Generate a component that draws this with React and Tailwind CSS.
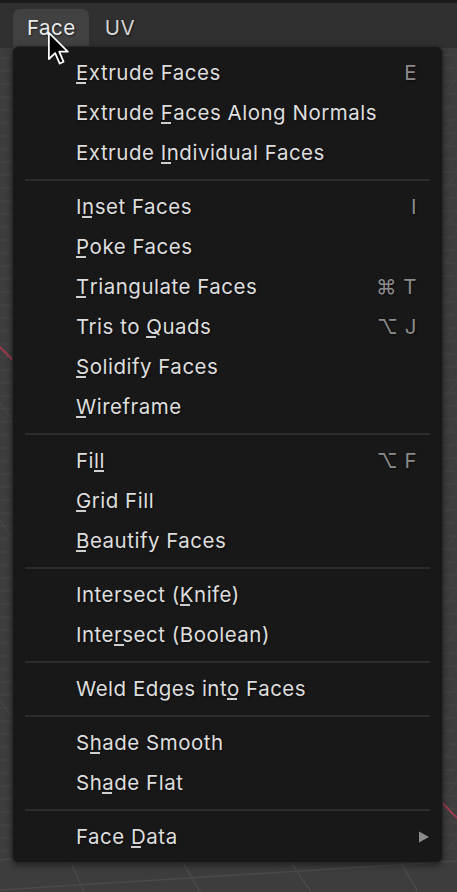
import React from "react";

const groups = [
  [
    { label: "Extrude Faces", u: 0, sc: "E" },
    { label: "Extrude Faces Along Normals", u: 8 },
    { label: "Extrude Individual Faces", u: 8 },
  ],
  [
    { label: "Inset Faces", u: 1, sc: "I" },
    { label: "Poke Faces", u: 0 },
    { label: "Triangulate Faces", u: 0, sc: "⌘ T" },
    { label: "Tris to Quads", u: 8, sc: "⌥ J" },
    { label: "Solidify Faces", u: 0 },
    { label: "Wireframe", u: 0 },
  ],
  [
    { label: "Fill", u: 2, sc: "⌥ F" },
    { label: "Grid Fill", u: 0 },
    { label: "Beautify Faces", u: 0 },
  ],
  [
    { label: "Intersect (Knife)", u: 11 },
    { label: "Intersect (Boolean)", u: 4 },
  ],
  [{ label: "Weld Edges into Faces", u: 14 }],
  [
    { label: "Shade Smooth", u: 1 },
    { label: "Shade Flat", u: 2 },
  ],
  [{ label: "Face Data", u: 5, arrow: true }],
];

function Label({ text, u }) {
  return (
    <span className="whitespace-pre">
      {text.slice(0, u)}
      <span className="relative">
        {text[u]}
        <span className="absolute left-0 bottom-[1px] w-[10px] h-[2px] bg-[#cfcfcf]" />
      </span>
      {text.slice(u + 1)}
    </span>
  );
}

function Item({ it }) {
  return (
    <div className="h-[40px] flex items-center pl-[63px] pr-[25px] text-[#dedede]">
      <Label text={it.label} u={it.u} />
      <div className="flex-1" />
      {it.sc && <span className="text-[#8b8b8b] whitespace-pre">{it.sc}</span>}
      {it.arrow && (
        <svg width="12" height="12" viewBox="0 0 12 12" className="mr-[-13px]">
          <path d="M1 0.5 L11 6 L1 11.5 Z" fill="#8b8b8b" />
        </svg>
      )}
    </div>
  );
}

function Grid() {
  const hs = [];
  for (let y = 58; y < 856; y += 13) hs.push(y);
  const diagR = [];
  for (let y = 60; y < 840; y += 19) diagR.push(y);
  return (
    <svg
      className="absolute inset-0 w-full h-full"
      viewBox="0 48 457 844"
      preserveAspectRatio="none"
    >
      {hs.map((y, i) => (
        <line key={"h" + i} x1="0" y1={y} x2="457" y2={y - 3} stroke="#474747" strokeWidth="1" />
      ))}
      {diagR.map((y, i) => (
        <line key={"d" + i} x1="444" y1={y + 14} x2="457" y2={y} stroke="#454545" strokeWidth="1" />
      ))}
      <line x1="0" y1="403" x2="11" y2="418" stroke="#4a4a4a" strokeWidth="1" />
      <line x1="0" y1="520" x2="11" y2="536" stroke="#4a4a4a" strokeWidth="1" />
      <line x1="0" y1="700" x2="11" y2="716" stroke="#4a4a4a" strokeWidth="1" />
      <line x1="0" y1="890" x2="457" y2="861" stroke="#4a4a4a" strokeWidth="1.5" />
      <line x1="0" y1="860" x2="30" y2="857" stroke="#4a4a4a" strokeWidth="1.5" />
      <line x1="69" y1="858" x2="84" y2="892" stroke="#4a4a4a" strokeWidth="1.5" />
      <line x1="180" y1="858" x2="200" y2="892" stroke="#4a4a4a" strokeWidth="1.5" />
      <line x1="288" y1="858" x2="311" y2="892" stroke="#4a4a4a" strokeWidth="1.5" />
      <line x1="398" y1="858" x2="418" y2="892" stroke="#4a4a4a" strokeWidth="1.5" />
      <line x1="0" y1="347" x2="457" y2="818" stroke="#9b3a4c" strokeWidth="2" />
    </svg>
  );
}

export default function App() {
  return (
    <div
      className="w-[457px] h-[892px] overflow-hidden flex flex-col bg-[#3d3d3d] text-[20.5px] tracking-[0.5px] relative [text-shadow:1px_1px_2px_rgba(0,0,0,0.55)]"
      style={{ fontFamily: 'Inter, "Noto Sans", sans-serif' }}
    >
      <div className="h-[3px] bg-[#1b1b1b]" />
      <div className="h-[45px] bg-[#303030] flex items-end pl-[13px] gap-[3px]">
        <div className="h-[39px] pl-[14px] pr-[13px] pb-[1px] rounded-t-[7px] bg-[#414141] text-[#ececec] flex items-center">
          Face
        </div>
        <div className="h-[39px] px-[13px] pb-[1px] text-[#d6d6d6] flex items-center">UV</div>
      </div>
      <div className="flex-1 relative">
        <Grid />
      </div>

      <div className="absolute left-[12px] top-[46px] w-[431px] bg-[#181818] border border-[#282828] rounded-[7px] pt-[6px] pb-[5px] shadow-[0_2px_6px_rgba(0,0,0,0.5)]">
        {groups.map((g, gi) => (
          <div key={gi}>
            {gi > 0 && (
              <div className="h-[14px] flex items-center px-[12px]">
                <div className="h-[2px] w-full bg-[#2c2c2c]" />
              </div>
            )}
            {g.map((it, ii) => (
              <Item key={ii} it={it} />
            ))}
          </div>
        ))}
      </div>

      <svg
        className="absolute left-[47px] top-[31px]"
        width="23"
        height="35"
        viewBox="0 0 13 20"
      >
        <path
          d="M1 1 L1 16 L4.6 12.6 L7.2 18.6 L9.4 17.6 L6.9 11.8 L11.8 11.8 Z"
          fill="#000"
          stroke="#fff"
          strokeWidth="1"
          strokeLinejoin="round"
        />
      </svg>
    </div>
  );
}
